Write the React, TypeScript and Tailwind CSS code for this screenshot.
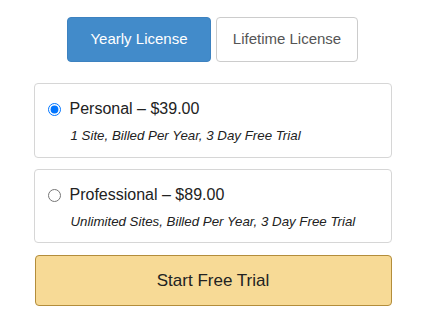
export default function App() {
  return (
    <div className="w-[425px] h-[324px] bg-white pt-[17px]" style={{ fontFamily: '"Liberation Sans", Arial, sans-serif' }}>
      <div className="flex justify-center gap-[5px]">
        <button className="w-[144px] h-[45px] rounded-[4px] bg-[#428bca] border border-[#3d82c0] text-white text-[15px]">Yearly License</button>
        <button className="w-[142px] h-[45px] rounded-[4px] bg-white border border-[#cccccc] text-[#555555] text-[15px]">Lifetime License</button>
      </div>
      <div className="w-[358px] mx-auto mt-[21px] flex flex-col">
        <label className="h-[75px] border border-[#d6d6d6] rounded-[4px] pl-[13px] pt-[15px] flex flex-col">
          <div className="flex items-center h-[20px]">
            <input type="radio" name="plan" defaultChecked className="w-[13px] h-[13px] m-0 accent-[#0075ff]" />
            <span className="ml-[9px] text-[16px] text-[#222]">Personal – $39.00</span>
          </div>
          <div className="ml-[23px] mt-[7px] text-[13.3px] italic text-[#222]">1 Site, Billed Per Year, 3 Day Free Trial</div>
        </label>
        <label className="mt-[11px] h-[74px] border border-[#d6d6d6] rounded-[4px] pl-[13px] pt-[15px] flex flex-col">
          <div className="flex items-center h-[20px]">
            <input type="radio" name="plan" className="w-[13px] h-[13px] m-0" />
            <span className="ml-[9px] text-[16px] text-[#222]">Professional – $89.00</span>
          </div>
          <div className="ml-[23px] mt-[7px] text-[13.3px] italic text-[#222]">Unlimited Sites, Billed Per Year, 3 Day Free Trial</div>
        </label>
        <button className="mt-[12px] ml-[1px] w-[357px] h-[51px] rounded-[4px] bg-[#f7da96] border border-[#b38d3b] text-[17px] text-[#222]">Start Free Trial</button>
      </div>
    </div>
  );
}
